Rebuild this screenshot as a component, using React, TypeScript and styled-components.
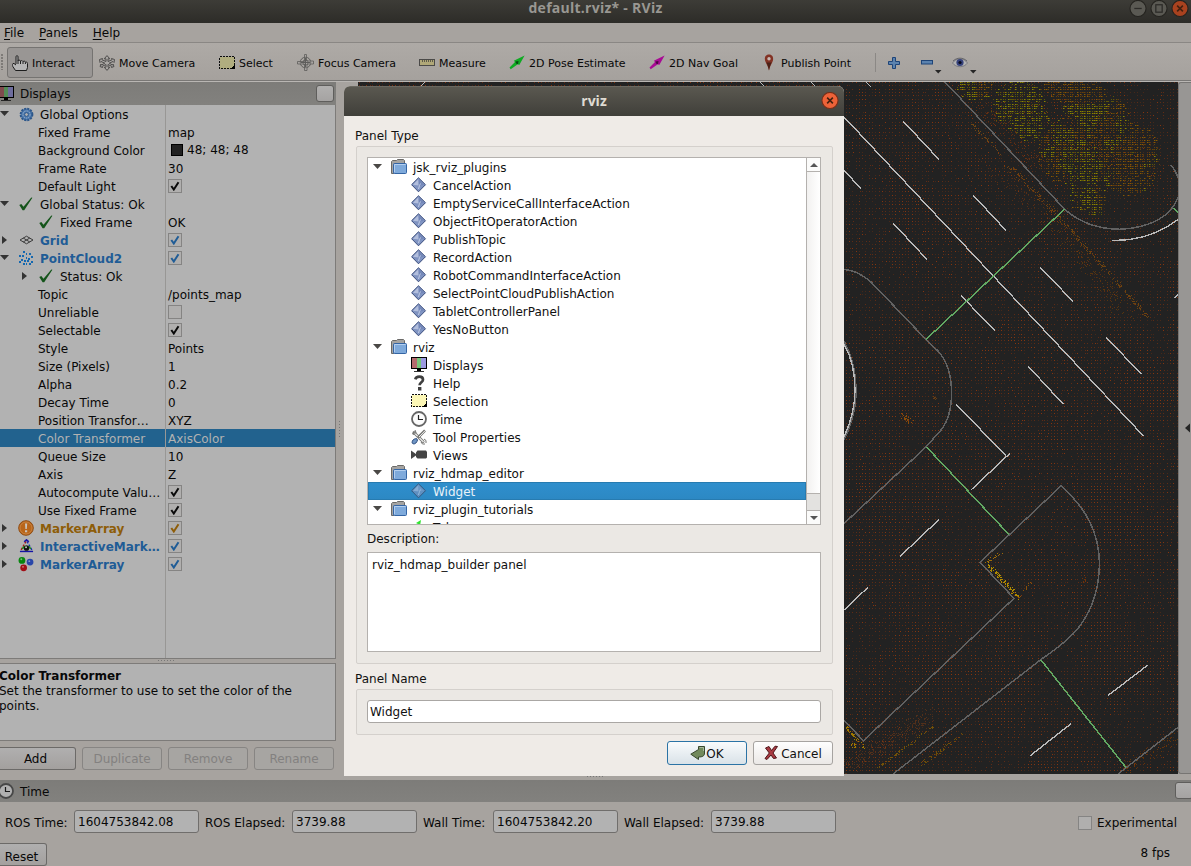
import React from "react";
import styled, { createGlobalStyle, css } from "styled-components";

const Global = createGlobalStyle`
  html, body { margin: 0; padding: 0; overflow: hidden; background: #a7a39f; }
  * { box-sizing: border-box; }
`;

const Window = styled.div`
  position: relative;
  width: 1191px;
  height: 866px;
  overflow: hidden;
  display: flex;
  flex-direction: column;
  background: #a7a39f;
  color: #080808;
  font: 12px/18px "DejaVu Sans", sans-serif;
  white-space: nowrap;
`;

const TitleBar = styled.header`
  position: relative;
  flex: none;
  height: 23px;
  padding: 0 0 8px 0;
  display: flex;
  align-items: center;
  justify-content: center;
  background: linear-gradient(#3d3c37, #2d2c28);
  color: #999792;
  font: 700 14px/14px "Open Sans", "Noto Sans", sans-serif;
  letter-spacing: 0.26px;
`;
const WindowControls = styled.div`
  position: absolute;
  right: 2px;
  top: 0;
  display: flex;
  gap: 3px;
`;

const MenuBar = styled.nav`
  flex: none;
  height: 20px;
  padding: 1px 4px 0;
  display: flex;
  gap: 15px;
  border-bottom: 1px solid #8a8784;
  u { text-underline-offset: 2px; }
`;

const ToolBar = styled.div`
  flex: none;
  height: 38px;
  padding: 4px 0 0 0;
  display: flex;
  background: linear-gradient(#aeaaa6, #a5a19d);
  border-bottom: 1px solid #797775;
  font-size: 11px;
`;
const Grip = styled.div`
  flex: none;
  width: 7px;
  height: 16px;
  margin-top: 7px;
  background: radial-gradient(circle at 2px 1px, #7d7a77 0.8px, transparent 1px) 0 0 / 7px 3px;
`;
const ToolButton = styled.div<{ $w: number; $active?: boolean }>`
  flex: none;
  width: ${(p) => p.$w}px;
  height: 31px;
  padding-left: 4px;
  display: flex;
  align-items: center;
  gap: 4px;
  border: 1px solid transparent;
  border-radius: 3px;
  ${(p) =>
    p.$active &&
    css`
      margin-right: 1px;
      background: #999694;
      border-color: #757371;
    `}
`;
/* Label sitting one pixel below the centre line of its row */
const Label = styled.span<{ $pad?: number }>`
  padding: 2px 0 0 ${(p) => p.$pad || 0}px;
`;
const ToolSlot = styled.div<{ $w: number }>`
  flex: none;
  width: ${(p) => p.$w}px;
  height: 31px;
  display: flex;
  align-items: center;
  gap: 2px;
`;
const ToolSeparator = styled.div`
  width: 1px;
  height: 19px;
  margin: 6px 12px 0 5px;
  background: #8b8885;
`;

const Main = styled.div`
  flex: none;
  height: 699px;
  display: flex;
  border-top: 1px solid #b9b6b3;
`;
const Dock = styled.aside`
  width: 336px;
  flex: none;
  display: flex;
  flex-direction: column;
`;
const DockHeader = styled.div<{ $h: number }>`
  flex: none;
  height: ${(p) => p.$h}px;
  padding-right: 2px;
  display: flex;
  align-items: center;
  background: linear-gradient(#7d7c79, #82817e);
  overflow: hidden;
`;
const HeaderText = styled.span`
  flex: 1;
  padding: 1px 0 0 6px;
`;
const HeaderIcon = styled.div`
  flex: none;
  display: flex;
  margin-left: -2px;
`;
const SquareButton = styled.i<{ $push?: number }>`
  flex: none;
  width: 18px;
  height: 17px;
  margin: -1px ${(p) => -(p.$push || 0)}px 0 0;
  border: 1px solid #5f5e5c;
  border-radius: 3px;
  background: linear-gradient(#b1b0af, #a5a3a2);
`;

const DisplayTree = styled.div`
  flex: none;
  height: 554px;
  background: #b2b2b2;
  border: 1px solid #7d7b79;
  border-width: 0 1px 1px 0;
`;
const PropRow = styled.div<{ $sel?: boolean }>`
  height: 18px;
  display: grid;
  grid-template-columns: 166px 1fr;
  background: ${(p) => (p.$sel ? "#22628e" : "transparent")};
  color: ${(p) => (p.$sel ? "#b2b2b2" : "inherit")};
`;
const NameCell = styled.div<{ $pad: number; $bold?: string }>`
  display: flex;
  align-items: center;
  height: 18px;
  padding-left: ${(p) => p.$pad}px;
  border-right: 1px solid #989795;
  overflow: hidden;
  ${(p) =>
    p.$bold &&
    css`
      color: ${p.$bold};
      font-weight: 700;
    `}
`;
const IconCell = styled.div`
  flex: none;
  width: 16px;
  margin-right: 6px;
  display: flex;
  justify-content: center;
  align-items: center;
`;
const Expander = styled.i<{ $open?: boolean }>`
  flex: none;
  width: 18px;
  height: 8px;
  display: block;
  background: #333;
  clip-path: ${(p) => (p.$open ? "polygon(0 1px, 9px 1px, 4.5px 6px)" : "polygon(2px 0, 7px 4px, 2px 8px)")};
`;
const ValueCell = styled.div`
  display: flex;
  align-items: center;
  padding-left: 2px;
  height: 18px;
`;
const Swatch = styled.i`
  width: 12px;
  height: 12px;
  margin: 0 4px 0 3px;
  background: #212121;
  border: 1px solid #000;
`;
const Box = styled.i`
  flex: none;
  width: 14px;
  height: 14px;
  border: 1px solid #858483;
  background: #b0afae;
  display: flex;
  align-items: center;
  justify-content: center;
`;
const Splitter = styled.div`
  flex: none;
  height: 4px;
  padding: 1px 4px 0 0;
  display: flex;
  justify-content: center;
`;
const Dots = styled.i<{ $vertical?: boolean }>`
  display: block;
  width: ${(p) => (p.$vertical ? 1 : 17)}px;
  height: ${(p) => (p.$vertical ? 17 : 1)}px;
  background: ${(p) =>
    p.$vertical
      ? "repeating-linear-gradient(#777 0 1px, transparent 1px 3px)"
      : "repeating-linear-gradient(90deg, #777 0 1px, transparent 1px 3px)"};
`;
const HelpBox = styled.div`
  flex: none;
  height: 78px;
  padding: 5px 0 0 0;
  background: #b2b2b2;
  border: 1px solid #7d7b79;
  border-left: 0;
  line-height: 15px;
  text-indent: -1px;
`;
const ButtonRow = styled.div`
  display: flex;
  gap: 6px;
  padding-top: 6px;
`;
const PlainButton = styled.button<{ $w: number; $off?: boolean; $clip?: number; $drop?: number }>`
  width: ${(p) => p.$w}px;
  height: 23px;
  padding: ${(p) => p.$drop || 0}px ${(p) => p.$clip || 0}px 0 0;
  flex: none;
  border: 1px solid ${(p) => (p.$off ? "#878583" : "#6c6a68")};
  border-radius: ${(p) => (p.$clip ? "0 3px 3px 0" : "3px")};
  ${(p) => p.$clip && "border-left: 0;"}
  background: ${(p) => (p.$off ? "#a7a5a2" : "linear-gradient(#b0afaf, #a3a09e)")};
  color: ${(p) => (p.$off ? "#838180" : "#080808")};
  font: 12px/20px "DejaVu Sans", sans-serif;
`;
const Gutter = styled.div`
  width: 22px;
  flex: none;
  padding: 339px 0 0 3px;
`;
const Viewport = styled.div`
  width: 820px;
  height: 692px;
  flex: none;
  background: #222;
  svg { display: block; }
`;
const ViewsHandle = styled.div`
  width: 14px;
  height: 692px;
  display: flex;
  align-items: center;
  justify-content: flex-end;
  background: #989694;
  border: 1px solid #777573;
  border-width: 1px 0 1px 1px;
  border-radius: 3px 0 0 3px;
`;

const TimeBody = styled.div`
  height: 43px;
  padding: 8px 14px 0 5px;
  display: flex;
  align-items: flex-start;
`;
const TimeLabel = styled.span<{ $w: number }>`
  width: ${(p) => p.$w}px;
  flex: none;
  line-height: 27px;
`;
const TimeField = styled.div`
  flex: none;
  width: 125px;
  height: 23px;
  padding-left: 3px;
  margin-right: 6px;
  line-height: 22px;
  border: 1px solid #706e6c;
  border-radius: 3px;
  background: #b2b2b2;
`;
const Experimental = styled.label`
  margin-left: auto;
  display: flex;
  align-items: center;
  gap: 5px;
  height: 25px;
`;
const StatusBar = styled.footer`
  display: flex;
  justify-content: space-between;
  padding-right: 21px;
`;
const FrameRate = styled.span`
  line-height: 20px;
`;

const Dialog = styled.section`
  position: absolute;
  left: 344px;
  top: 86px;
  width: 500px;
  height: 690px;
  border-radius: 6px 6px 0 0;
  overflow: hidden;
  display: flex;
  flex-direction: column;
  background: #efebe7;
  color: #111;
`;
const DialogTitle = styled.header`
  position: relative;
  flex: none;
  height: 30px;
  padding-bottom: 2px;
  display: flex;
  align-items: center;
  justify-content: center;
  background: linear-gradient(#5a5850, #403f3a);
  border-top: 1px solid #6a6860;
  color: #dfdbd2;
  font: 700 14px/20px "Open Sans", "Noto Sans", sans-serif;
  svg { position: absolute; right: 5px; top: 5px; }
`;
const DialogBody = styled.div`
  padding: 10px 11px 0 12px;
  display: flex;
  flex-direction: column;
`;
const GroupLabel = styled.div<{ $mt?: number }>`
  height: 20px;
  line-height: 20px;
  margin: ${(p) => p.$mt || 0}px 0 0 -1px;
`;
const Group = styled.div<{ $h: number }>`
  height: ${(p) => p.$h}px;
  padding: 10px 11px 10px 10px;
  background: #ebe8e4;
  border: 1px solid #d4d0cc;
  border-radius: 2px;
`;
const PluginBox = styled.div`
  height: 368px;
  display: flex;
  border: 1px solid #b4b1ae;
  background: #fff;
`;
const PluginList = styled.div`
  flex: 1;
  overflow: hidden;
`;
const PluginRow = styled.div<{ $sel?: boolean; $level: number }>`
  height: 18px;
  padding-left: ${(p) => (p.$level ? 43 : 5)}px;
  display: flex;
  align-items: center;
  background: ${(p) => (p.$sel ? "linear-gradient(#2f8fcd, #2c88c3)" : "none")};
  box-shadow: ${(p) => (p.$sel ? "inset 0 0 0 1px #277bb0" : "none")};
  color: ${(p) => (p.$sel ? "#e9f2f8" : "inherit")};
  i { background: #4a4846; }
`;
const Scroll = styled.div`
  width: 14px;
  display: flex;
  flex-direction: column;
  border-left: 1px solid #b4b1ae;
  background: #e3e2e0;
`;
const ScrollEnd = styled.div<{ $bottom?: boolean }>`
  height: 14px;
  display: flex;
  align-items: center;
  justify-content: center;
  background: #fbfbfa;
  border: 0 solid #b4b1ae;
  ${(p) => (p.$bottom ? "border-top-width: 1px; margin-top: auto;" : "border-bottom-width: 1px;")}
`;
const Thumb = styled.div`
  height: 322px;
  background: linear-gradient(90deg, #f2f1f0, #fff);
  border-bottom: 1px solid #b4b1ae;
`;
const DescriptionLabel = styled.div`
  height: 27px;
  padding-top: 5px;
`;
const DescriptionBox = styled.div`
  height: 100px;
  padding: 3px 4px;
  border: 1px solid #b4b1ae;
  background: #fff;
`;
const NameInput = styled.div`
  height: 23px;
  padding-left: 2px;
  line-height: 22px;
  border: 1px solid #aaa7a4;
  border-radius: 3px;
  background: #fff;
`;
const DialogActions = styled.div`
  display: flex;
  justify-content: flex-end;
  gap: 6px;
  padding-top: 6px;
`;
const DialogButton = styled.button<{ $primary?: boolean }>`
  width: 80px;
  height: 24px;
  padding: 0;
  display: flex;
  align-items: center;
  justify-content: center;
  gap: ${(p) => (p.$primary ? 0 : 2)}px;
  color: #111;
  border: 1px solid ${(p) => (p.$primary ? "#2b73a5" : "#a6a3a0")};
  border-radius: 3px;
  background: ${(p) => (p.$primary ? "linear-gradient(#f9fbfc, #d9e2e8)" : "linear-gradient(#fefefe, #ebe8e6)")};
  font: 12px/20px "DejaVu Sans", sans-serif;
`;
const Dim = styled.span`
  display: flex;
  filter: brightness(0.7);
`;
const ResizeDots = styled.div`
  position: absolute;
  left: 587px;
  top: 776px;
`;

/* ---------- icons ---------- */

const MonitorIcon = () => (
  <svg width="16" height="16" viewBox="0 0 16 16" shapeRendering="crispEdges">
    <rect x="0" y="0" width="16" height="12" fill="#000" />
    <rect x="1" y="1" width="5" height="10" fill="#b56a6e" />
    <rect x="6" y="1" width="4" height="10" fill="#78c67c" />
    <rect x="10" y="1" width="5" height="10" fill="#9c9ae0" />
    <rect x="6" y="12" width="4" height="2" fill="#000" />
    <rect x="3" y="14" width="10" height="1" fill="#333" />
  </svg>
);
const ClockIcon = () => (
  <svg width="16" height="16" viewBox="0 0 16 16">
    <circle cx="8" cy="8" r="7" fill="#fcfcfc" stroke="#666" strokeWidth="1.8" />
    <path d="M7.5 4v4.5H12" stroke="#222" strokeWidth="1.2" fill="none" />
  </svg>
);
const SelectIcon = () => (
  <svg width="16" height="14" viewBox="0 0 16 14" shapeRendering="crispEdges">
    <rect x=".5" y=".5" width="15" height="12" fill="#fcf7b6" stroke="#111" strokeDasharray="2 1" />
    <path d="M16 9v4h-4v-1l3-3z" fill="#000" />
  </svg>
);
const DiamondIcon = ({ sel }: { sel?: boolean }) => (
  <svg width="16" height="16" viewBox="0 0 16 16">
    <path d="M7.5 .8 14.5 7.7 7.5 14.8 .6 7.7Z" fill={sel ? "#5f8fc0" : "#8094c2"} stroke={sel ? "#35597f" : "#3a4d7c"} strokeWidth="1" />
    <path d="M7.5 2V8.500L2 7.700Z" fill={sel ? "#86acd4" : "#b3bfdd"} />
    <path d="M7.5 2 13 7.700 8 8.500Z" fill={sel ? "#6c97c6" : "#7387b8"} />
    <path d="M8.500 8.500 9.500 6.500M8.500 8.500 7.500 12" fill="none" stroke={sel ? "#9dbfe0" : "#c8d2ea"} strokeWidth=".9" />
  </svg>
);
const FolderIcon = () => (
  <svg width="17" height="16" viewBox="0 0 17 16">
    <path d="M.5 14.5V2.5L1.5 1.5H5.5L6.5 .5H12.5L13.5 1.5V5H3V14.5Z" fill="#a5a4a2" stroke="#6b6a68" />
    <rect x="2.5" y="4.5" width="13" height="10" rx="1" fill="#7faadb" stroke="#3465a4" />
    <path d="M3.5 13V5.500H14.500" stroke="#b4cfef" fill="none" />
  </svg>
);
const QuestionIcon = () => (
  <svg width="16" height="16" viewBox="0 0 16 16">
    <path d="M4.300 4.300C4.800 2.300 6.300 1.700 8.300 1.700 10.500 1.700 12 2.800 12 4.700 12 7.300 8.600 7.300 8.600 10.300" stroke="#3f3f3f" strokeWidth="2.700" fill="none" />
    <rect x="7" y="12" width="3.400" height="3.500" fill="#3f3f3f" />
  </svg>
);
const ToolsIcon = () => (
  <svg width="16" height="16" viewBox="0 0 16 16" fill="none">
    <path d="M3 3.500 12 12.500" stroke="#747472" strokeWidth="3" strokeLinecap="round" />
    <path d="M3.500 4 12.500 13" stroke="#ededeb" strokeWidth="1.200" />
    <path d="M1 4.500 3 5.500 5 3.500 4 1M13 10l2 1.500v2.500M10 13l1.500 2H14" stroke="#747472" />
    <path d="M14 1.500 7 8.500" stroke="#70706e" strokeWidth="2.500" />
    <path d="M14 1.800 8 8" stroke="#f0f0ee" strokeWidth="1" />
    <path d="M5.500 9.500 6.500 11C5.800 13.500 4.300 15.300 2.200 14.800 .7 14.300 .8 12.800 2 11 3 10 4.200 9.700 5.500 9.500Z" fill="#6f95c4" stroke="#28497c" />
  </svg>
);
const CameraIcon = () => (
  <svg width="16" height="16" viewBox="0 0 16 16">
    <path d="M0 3.500 5 7V5.500L6.500 3.500H15L16 5V10.500L15 11.500H6.500L5 10V8.500L0 12Z" fill="#444" />
  </svg>
);
const GreenArrowIcon = () => (
  <svg width="16" height="16" viewBox="0 0 16 16">
    <path d="M1 9 7 5 5 4 10 1 9 7" fill="#2fe52f" />
  </svg>
);
const GearIcon = () => (
  <svg width="15" height="15" viewBox="0 0 16 16">
    <circle cx="8" cy="8" r="6.300" fill="#4a76ab" stroke="#2c5689" strokeWidth="2" strokeDasharray="2.200 1.100" />
    <circle cx="8" cy="8" r="3.800" fill="none" stroke="#9db4cf" strokeWidth="1" strokeDasharray="1.500 1" />
    <circle cx="8" cy="8" r="2" fill="#b2b2b2" stroke="#2c5689" />
  </svg>
);
const OkIcon = () => (
  <svg width="14" height="14" viewBox="0 0 14 14">
    <path d="M.3 8 2.300 7 4.500 9.800 12.300 .6 13.400 .8 5.200 13.200 3.600 13.200Z" fill="#14541a" />
  </svg>
);
const GridIcon = () => (
  <svg width="15" height="10" viewBox="0 0 15 10" fill="none" stroke="#3b3b3b">
    <path d="M1 5 7.500 1.200 14 5 7.500 8.800ZM4.200 3 10.800 7M10.800 3 4.200 7" />
  </svg>
);
const CLOUD: number[][] = [[5, 1], [8, 3], [12, 3], [1, 5], [4, 5], [14, 6], [8, 7], [11, 8], [3, 9], [6, 10], [10, 10], [14, 11], [1, 11], [5, 13], [8, 13], [12, 13]];
const CloudIcon = () => (
  <svg width="17" height="16" viewBox="0 0 17 16" shapeRendering="crispEdges">
    {CLOUD.map(([x, y], i) => (
      <rect key={i} x={x} y={y} width="2" height="2" fill="#1468b0" />
    ))}
  </svg>
);
const WarnIcon = () => (
  <svg width="16" height="16" viewBox="0 0 16 16">
    <circle cx="8" cy="8" r="7.300" fill="#b9661b" stroke="#8f4c13" />
    <circle cx="8" cy="8" r="6" fill="none" stroke="#cb8848" strokeWidth=".8" />
    <path d="M7 3.500H9.200L8.800 9H7.400ZM7 10.300H9.200V12.300H7Z" fill="#c9c4bd" />
  </svg>
);
const InteractiveIcon = () => (
  <svg width="15" height="15" viewBox="0 0 16 16" fill="none" strokeWidth="1.500">
    <path d="M7.500 2.500 1.800 12.500" stroke="#a51717" strokeDasharray="2.500 1.500" />
    <path d="M8.500 2.500 14.200 12.500" stroke="#1c2dad" strokeDasharray="2.500 1.500" />
    <path d="M1 13.300H15" stroke="#1414a5" />
    <path d="M5.500 3 8 .8 10.500 3" stroke="#1414a5" />
    <path d="M3.500 10.500A5 5 0 0 1 12.500 10.500" stroke="#178b17" />
    <circle cx="8" cy="9.800" r="2.800" fill="#111" />
    <circle cx="7.500" cy="8.800" r="1" fill="#ccc" />
  </svg>
);
const MarkersIcon = () => (
  <svg width="17" height="16" viewBox="0 0 17 16">
    <circle cx="4.200" cy="4.200" r="3.600" fill="#08860f" />
    <circle cx="12.800" cy="6" r="3.600" fill="#2946a9" />
    <circle cx="6" cy="12" r="3.600" fill="#a20f17" />
    <circle cx="3.500" cy="3" r="1" fill="#73bd75" />
    <circle cx="12" cy="5" r="1" fill="#8294cc" />
    <circle cx="5.300" cy="11" r="1" fill="#cf7b80" />
  </svg>
);
const CheckMark = ({ color }: { color: string }) => (
  <svg width="10" height="10" viewBox="0 0 10 10">
    <path d="M1.300 5 3.800 8.500 8.500 1.300" stroke={color} strokeWidth="2" fill="none" />
  </svg>
);
const HandIcon = () => (
  <svg width="16" height="16" viewBox="0 0 16 16">
    <path d="M4 9V1.700C4 .3 6 .3 6 1.700V5.500C7 4.800 8 5.200 8.400 6 9.500 5.200 10.600 5.800 11 6.600 12.200 5.700 13.300 6.300 13.400 7.300 14.500 6.600 15.500 7.300 15.500 8.500V12.500L14.500 15.500H3.500L.8 11.500C0 10 .3 9 1 8.500H2L4 10" fill="#b5b5b5" stroke="#1d1d1d" />
    <path d="M6 5V9M8.500 6V9M11 7V9M13.400 7.500V9" stroke="#1d1d1d" fill="none" />
  </svg>
);
const MoveIcon = () => (
  <svg width="16" height="16" viewBox="0 0 16 16" fill="#aaa7a4" stroke="#4e4d4c" strokeWidth="1">
    <path d="M8 .6 10.800 3.800H9V6.500L13 4.800 12.500 3.500 15.500 4.500 15 7.500 14 6.500 10.200 8.200 13.500 10 14 9 15 11.500 12.500 12.500 12.800 11.300 9 9.500V12.200H10.800L8 15.400 5.200 12.200H7V9.500L3.200 11.300 3.500 12.500 1 11.500 2 9 2.500 10 5.800 8.200 2 6.500 1 7.500 .5 4.500 3.500 3.500 3 4.800 7 6.500V3.800H5.200Z" />
  </svg>
);
const FocusIcon = () => (
  <svg width="17" height="17" viewBox="0 0 17 17" fill="none" stroke="#5e5d5b">
    <circle cx="8.500" cy="8.500" r="5.300" />
    <circle cx="8.500" cy="8.500" r="2.600" />
    <path d="M7.500 .5H9.500V7H16.500V10H10V16.500H7.500V10H.5V7.500H7.500Z" strokeWidth=".8" fill="#a9a6a3" fillOpacity=".5" />
    <path d="M3.500 8.500H13.500M8.500 3.500V13.500" />
  </svg>
);
const RulerIcon = () => (
  <svg width="16" height="7" viewBox="0 0 16 7" shapeRendering="crispEdges">
    <rect x=".5" y=".5" width="15" height="6" fill="#b0a878" stroke="#4b4a48" />
    <path d="M3.500 1v2M5.500 1v2M7.500 1v2M9.500 1v2M11.500 1v2M13.500 1v2" stroke="#5e5b4c" />
  </svg>
);
const NeedleIcon = ({ color, dark }: { color: string; dark: string }) => (
  <svg width="16" height="16" viewBox="0 0 16 16">
    <path d="M.5 12.500 6 7 4.800 5.800 15.600 .6 10.300 10 8.800 9.200 1.700 14.300Z" fill={color} />
    <path d="M6.500 6.500 9.500 6 9 9.200 7 8.500Z" fill={dark} />
  </svg>
);
const PinIcon = () => (
  <svg width="16" height="17" viewBox="0 0 16 17">
    <path d="M8 .5C4.800 .5 3.600 3 3.900 5.500 4.200 8.500 7 11.500 8 16.500 9 11.500 11.800 8.500 12.100 5.500 12.400 3 11.200 .5 8 .5Z" fill="#823224" />
    <path d="M5.500 8.500C6.500 11 7.500 13 8 16.500 8.500 13 9.500 11 10.500 8.500Z" fill="#4a2118" />
    <circle cx="8" cy="4.800" r="1.700" fill="#c7b7b2" />
  </svg>
);
const PlusIcon = () => (
  <svg width="12" height="12" viewBox="0 0 12 12">
    <path d="M4.500 .5H7.500V4.500H11.500V7.500H7.500V11.500H4.500V7.500H.5V4.500H4.500Z" fill="#5b82ae" stroke="#1e4478" />
  </svg>
);
const MinusIcon = () => (
  <svg width="12" height="5" viewBox="0 0 12 5">
    <rect x=".5" y=".5" width="11" height="3.500" fill="#5b82ae" stroke="#1e4478" />
  </svg>
);
const EyeIcon = () => (
  <svg width="16" height="12" viewBox="0 0 16 12">
    <path d="M.5 6C4 .5 12 .5 15.500 6 12 11 4 11 .5 6Z" fill="#b3b3b3" stroke="#7b7b80" />
    <circle cx="8" cy="5.500" r="3.600" fill="#36427c" />
    <circle cx="8" cy="5.500" r="1.600" fill="#07091c" />
    <path d="M1 4C5 .2 11 .2 15 4" stroke="#66666b" fill="none" />
  </svg>
);
const DropArrow = () => (
  <svg width="7" height="22" viewBox="0 0 7 22">
    <path d="M0 18H6.500L3.200 21.500Z" fill="#262626" />
  </svg>
);
const RoundControl = ({ kind, size = 18, bright }: { kind: "min" | "max" | "close"; size?: number; bright?: boolean }) => (
  <svg width={size} height={size} viewBox="0 0 17 17" fill="none">
    <circle cx="8.500" cy="8" r="7.600" fill={kind === "close" ? (bright ? "#ed6238" : "#a9421f") : "#5a5953"} stroke={bright ? "#752e18" : "#24231f"} />
    {kind === "min" && <path d="M5 8H12" stroke="#2c2b28" strokeWidth="1.200" />}
    {kind === "max" && <rect x="5.500" y="4.500" width="6" height="7" stroke="#2c2b28" strokeWidth="1.200" />}
    {kind === "close" && <path d="M5.800 5.300 11.200 10.700M11.200 5.300 5.800 10.700" stroke="#43200f" strokeWidth="1.500" />}
  </svg>
);
const EnterIcon = () => (
  <svg width="16" height="17" viewBox="0 0 16 17">
    <path d="M8.500 1.500H14.500V8C14.500 11 12.500 12 8.500 12V14.500L.8 9.200 8.500 4.500Z" fill="#728a5c" stroke="#38472d" />
    <path d="M9.500 2.500H13.500V6" stroke="#a8b89a" fill="none" />
  </svg>
);
const CrossIcon = () => (
  <svg width="15" height="16" viewBox="0 0 15 16">
    <path d="M1.500 3 5 1.500 7.500 5.500 11 1.200 13.500 1.500 9 8 12.500 13 9.500 13.500 7 10 3 14.500 1 13.500 5.300 8Z" fill="#a93a42" stroke="#4e1519" />
  </svg>
);

/* ---------- map view ---------- */

const hash = (x: number, y: number) => {
  let h = (x * 374761393 + y * 668265263) | 0;
  h = Math.imul(h ^ (h >>> 13), 1274126177);
  return ((h ^ (h >>> 16)) >>> 0) / 4294967296;
};
const smooth = (x: number, y: number) => {
  const ix = Math.floor(x), iy = Math.floor(y);
  const fx = x - ix, fy = y - iy;
  const a = hash(ix, iy), b = hash(ix + 1, iy), c = hash(ix, iy + 1), d = hash(ix + 1, iy + 1);
  return (a * (1 - fx) + b * fx) * (1 - fy) + (c * (1 - fx) + d * fx) * fy;
};

type Layers = Record<string, string[]>;
const dot = (l: Layers, color: string, x: number, y: number) => {
  (l[color] = l[color] || []).push(`M${Math.round(x)} ${Math.round(y)}h1v1h-1z`);
};

/* cx, cy, rx, ry, yellowness of each tree canopy */
const CANOPIES: number[][] = [
  [975, 86, 19, 14, 0.5], [1018, 106, 28, 26, 1], [1030, 122, 20, 19, 0.9], [1068, 84, 26, 20, 0.1], [1085, 102, 24, 26, 0.4],
  [1068, 150, 32, 34, 0.4], [1096, 140, 36, 40, 0.6], [1128, 158, 32, 38, 0.2], [1108, 120, 22, 26, 0.5], [1092, 165, 26, 30, 0.8], [1082, 196, 14, 16, 0.8], [1095, 200, 10, 18, 0.6],
];
/* x1, y1, x2, y2, spread, count, colour */
const STREAKS: [number, number, number, number, number, number, string][] = [
  [971, 123, 1000, 153, 2, 40, "#6d4414"],
  [1006, 163, 1056, 213, 3, 90, "#70400f"],
  [1056, 213, 1146, 315, 2, 150, "#6d420f"],
  [1050, 215, 1125, 312, 9, 150, "#57350f"],
  [985, 165, 1060, 225, 10, 60, "#552f15"],
  [980, 105, 1040, 165, 9, 110, "#632f13"],
  [987, 564, 1018, 597, 2, 95, "#b08a00"],
  [985, 562, 1002, 552, 1.5, 18, "#a06b08"],
  [1018, 597, 1030, 583, 1.5, 16, "#8a5008"],
  [844, 725, 864, 747, 1.5, 45, "#a07800"],
  [851, 744, 854, 746, 2, 12, "#a07800"],
  [872, 772, 933, 726, 1.2, 75, "#725008"],
  [919, 766, 962, 734, 2, 55, "#6d4c08"],
  [844, 770, 930, 713, 8, 260, "#51301b"],
  [903, 415, 911, 423, 3, 26, "#8a4b08"],
  [930, 392, 936, 400, 1, 8, "#6b3d12"],
  [1083, 578, 1086, 582, 2, 12, "#703209"],
  [1120, 770, 1178, 735, 6, 90, "#663408"],
];

const buildPoints = (): Layers => {
  const l: Layers = {};
  for (let j = 0; j < 210; j++) {
    const y = 82 + Math.round(j * 3.31);
    if (y >= 774) break;
    for (let i = 0; i < 250; i++) {
      const x = 359 + Math.round(i * 3.31);
      if (x >= 1178) break;
      if (x < 842 && y > 86) continue;
      const n = smooth(x / 48, y / 48) * 0.6 + smooth(x / 17 + 40, y / 17) * 0.4;
      const r = hash(x + 7, y + 3);
      if (r > 0.4 + n * 0.75) continue;
      const jx = hash(x, y) > 0.88 ? 1 : 0;
      const k = hash(y, x + 5) + (n - 0.5) * 0.7;
      dot(l, k > 0.8 ? "#84350f" : k > 0.4 ? "#5f2c15" : "#462819", x + jx, y);
    }
  }
  for (let j = 0; j < 56; j++) {
    const y = 82 + Math.round(j * 2.4);
    for (let i = 0; i < 90; i++) {
      const x = 950 + Math.round(i * 2.4);
      let best = 0, hue = 0, weight = 0;
      for (const [cx, cy, rx, ry, yel] of CANOPIES) {
        const d = 1 - Math.hypot((x - cx) / rx, (y - cy) / ry);
        if (d > best) best = d;
        if (d > 0) {
          hue += yel * d;
          weight += d;
        }
      }
      if (best <= 0) continue;
      const n = smooth(x / 11, y / 11);
      if (hash(x * 3, y * 5) > 0.25 + Math.min(best, 0.5) * 0.8 + n * 0.4) continue;
      const yellow = hue / weight + (n - 0.5) * 0.9 > 0.5;
      const bright = hash(x + 91, y + 17);
      const c = yellow ? (bright > 0.6 ? "#8a8203" : "#5c5609") : bright > 0.6 ? "#845a06" : "#62400c";
      dot(l, c, x, y);
      if (bright > 0.5) dot(l, yellow ? "#5c5609" : "#55380c", x + 1, y);
    }
  }
  STREAKS.forEach(([x1, y1, x2, y2, s, count, c], k) => {
    for (let i = 0; i < count; i++) {
      const t = hash(i, k * 31 + 1);
      const ox = (hash(i, k * 31 + 2) - 0.5) * 2 * s;
      const oy = (hash(i, k * 31 + 3) - 0.5) * 2 * s;
      dot(l, c, x1 + (x2 - x1) * t + ox, y1 + (y2 - y1) * t + oy);
    }
  });
  return l;
};
const POINTS = buildPoints();

const CURBS = [
  "M945 82L1065 209.500C1080 223 1098 229 1120 229.300C1150 228 1172 216 1178 197",
  "M1171 165C1174 169 1177 174 1178 178",
  "M844 269.500C853 270 863 275 871 282L926 339.500L938 351C948 362 951.500 376 951.500 393C951.500 408 949 420 941 430L926 447L844 523.500",
  "M844 720.500L863.500 740.700L1014 598.300L980 562.300L1061 486C1086 508 1099 532 1099.500 564C1099 590 1091 615 1073 634C1064 643 1052 652 1041 659.500L893 774",
  "M1178 727.300L1118 774",
  "M844 341C853 358 857 376 856 396C855 412 850 428 844 440",
];
const LANES = [
  "M844 117L1143.500 436", "M903.500 121.500L939 159.500", "M844 170.500L861 188.500", "M973.500 195.500L1006 230.500",
  "M893.500 223.500L927 259.500", "M1040.500 267.500L1073 301.500", "M961 295.500L995.500 331.500", "M1106.500 337.500L1141.500 374.500",
  "M1028.500 366.500L1063.500 404.500", "M956.500 404.500L1006 456", "M1009.700 453.500L971.500 489.500", "M939 519.500L900 556.500",
  "M868 587.300L844 610", "M1147.500 665.300L1108 695.500", "M1071 723.700L1030.500 755.500", "M1174.500 297.500L1178 294.500",
  "M760 82L765 87", "M811 82L816 87", "M866 82L871 87", "M420 87L425 82",
  "M1112 240.300C1138 241 1160 233 1178 219.500",
  "M844 344C852 358 855 374 855 390C855 408 850 424 844 437",
];
const STOPS = ["M926 339.500L1064.700 209", "M1173.500 208L1178 212", "M926.500 447L1009 534.500", "M1041 660L1126 767.500"];

const Scene = () => (
  <svg width="820" height="692" viewBox="358 82 820 692" fill="none" shapeRendering="crispEdges">
    {Object.entries(POINTS).map(([c, d]) => (
      <path key={c} d={d.join("")} fill={c} />
    ))}
    <path d={CURBS.join("")} stroke="#616161" strokeWidth="1.500" />
    <path d={LANES.join("")} stroke="#b9b9b9" strokeWidth="1.400" />
    <path d={STOPS.join("")} stroke="#62a862" strokeWidth="1.500" />
  </svg>
);

/* ---------- data ---------- */

type Prop = {
  name: string;
  pad: number;
  open?: boolean;
  icon?: React.ReactNode;
  bold?: string;
  value?: string;
  check?: string;
  swatch?: boolean;
  sel?: boolean;
};
const BLUE = "#1f5c96";
const AMBER = "#8e5d08";
const BLACK = "#0a0a0a";
const PROPS: Prop[] = [
  { name: "Global Options", pad: 0, open: true, icon: <GearIcon /> },
  { name: "Fixed Frame", pad: 38, value: "map" },
  { name: "Background Color", pad: 38, value: "48; 48; 48", swatch: true },
  { name: "Frame Rate", pad: 38, value: "30" },
  { name: "Default Light", pad: 38, check: BLACK },
  { name: "Global Status: Ok", pad: 0, open: true, icon: <OkIcon /> },
  { name: "Fixed Frame", pad: 38, icon: <OkIcon />, value: "OK" },
  { name: "Grid", pad: 0, open: false, icon: <GridIcon />, bold: BLUE, check: BLUE },
  { name: "PointCloud2", pad: 0, open: true, icon: <CloudIcon />, bold: BLUE, check: BLUE },
  { name: "Status: Ok", pad: 20, open: false, icon: <OkIcon /> },
  { name: "Topic", pad: 38, value: "/points_map" },
  { name: "Unreliable", pad: 38, check: "none" },
  { name: "Selectable", pad: 38, check: BLACK },
  { name: "Style", pad: 38, value: "Points" },
  { name: "Size (Pixels)", pad: 38, value: "1" },
  { name: "Alpha", pad: 38, value: "0.2" },
  { name: "Decay Time", pad: 38, value: "0" },
  { name: "Position Transfor…", pad: 38, value: "XYZ" },
  { name: "Color Transformer", pad: 38, value: "AxisColor", sel: true },
  { name: "Queue Size", pad: 38, value: "10" },
  { name: "Axis", pad: 38, value: "Z" },
  { name: "Autocompute Valu…", pad: 38, check: BLACK },
  { name: "Use Fixed Frame", pad: 38, check: BLACK },
  { name: "MarkerArray", pad: 0, open: false, icon: <WarnIcon />, bold: AMBER, check: AMBER },
  { name: "InteractiveMark…", pad: 0, open: false, icon: <InteractiveIcon />, bold: BLUE, check: BLUE },
  { name: "MarkerArray", pad: 0, open: false, icon: <MarkersIcon />, bold: BLUE, check: BLUE },
];
const TreeFill = styled.div`
  flex: 1;
  width: 166px;
  border-right: 1px solid #989795;
`;
const TreeRows = styled.div`
  height: 553px;
  display: flex;
  flex-direction: column;
`;

const PLUGINS: { name: string; icon?: React.ReactNode; sel?: boolean }[] = [
  { name: "jsk_rviz_plugins" },
  ...["CancelAction", "EmptyServiceCallInterfaceAction", "ObjectFitOperatorAction", "PublishTopic", "RecordAction", "RobotCommandInterfaceAction", "SelectPointCloudPublishAction", "TabletControllerPanel", "YesNoButton"].map((name) => ({ name, icon: <DiamondIcon /> })),
  { name: "rviz" },
  { name: "Displays", icon: <MonitorIcon /> },
  { name: "Help", icon: <QuestionIcon /> },
  { name: "Selection", icon: <SelectIcon /> },
  { name: "Time", icon: <ClockIcon /> },
  { name: "Tool Properties", icon: <ToolsIcon /> },
  { name: "Views", icon: <CameraIcon /> },
  { name: "rviz_hdmap_editor" },
  { name: "Widget", icon: <DiamondIcon sel />, sel: true },
  { name: "rviz_plugin_tutorials" },
  { name: "Teleop", icon: <GreenArrowIcon /> },
];

const TOOLS: { name: string; w: number; icon: React.ReactNode; active?: boolean }[] = [
  { name: "Interact", w: 86, icon: <HandIcon />, active: true },
  { name: "Move Camera", w: 120, icon: <MoveIcon /> },
  { name: "Select", w: 78, icon: <Dim><SelectIcon /></Dim> },
  { name: "Focus Camera", w: 122, icon: <FocusIcon /> },
  { name: "Measure", w: 90, icon: <RulerIcon /> },
  { name: "2D Pose Estimate", w: 140, icon: <NeedleIcon color="#0faa22" dark="#064d10" /> },
  { name: "2D Nav Goal", w: 112, icon: <NeedleIcon color="#a80a94" dark="#4e0545" /> },
  { name: "Publish Point", w: 114, icon: <PinIcon /> },
];

const TIMES: [string, number, string][] = [
  ["ROS Time:", 69, "1604753842.08"],
  ["ROS Elapsed:", 87, "3739.88"],
  ["Wall Time:", 70, "1604753842.20"],
  ["Wall Elapsed:", 87, "3739.88"],
];

const ScrollArrow = ({ down }: { down?: boolean }) => (
  <svg width="8" height="4" viewBox="0 0 8 4">
    <path d={down ? "M0 0H8L4 4Z" : "M0 4H8L4 0Z"} fill="#555" />
  </svg>
);

export default function App() {
  return (
    <Window>
      <Global />
      <TitleBar>
        default.rviz* - RViz
        <WindowControls>
          <RoundControl kind="min" />
          <RoundControl kind="max" />
          <RoundControl kind="close" />
        </WindowControls>
      </TitleBar>
      <MenuBar>
        <span><u>F</u>ile</span>
        <span><u>P</u>anels</span>
        <span><u>H</u>elp</span>
      </MenuBar>
      <ToolBar>
        <Grip />
        {TOOLS.map((t) => (
          <ToolButton key={t.name} $w={t.w} $active={t.active}>
            {t.icon}
            <Label>{t.name}</Label>
          </ToolButton>
        ))}
        <ToolSeparator />
        <ToolSlot $w={33}><PlusIcon /></ToolSlot>
        <ToolSlot $w={31}><MinusIcon /><DropArrow /></ToolSlot>
        <ToolSlot $w={30}><EyeIcon /><DropArrow /></ToolSlot>
      </ToolBar>
      <Main>
        <Dock>
          <DockHeader $h={23}>
            <HeaderIcon><Dim><MonitorIcon /></Dim></HeaderIcon>
            <HeaderText>Displays</HeaderText>
            <SquareButton />
          </DockHeader>
          <DisplayTree>
            <TreeRows>
              {PROPS.map((p, i) => (
                <PropRow key={i} $sel={p.sel}>
                  <NameCell $pad={p.pad} $bold={p.bold}>
                    {p.open !== undefined && <Expander $open={p.open} />}
                    {p.icon && <IconCell>{p.icon}</IconCell>}
                    <Label>{p.name}</Label>
                  </NameCell>
                  <ValueCell>
                    {p.swatch && <Swatch />}
                    {p.swatch ? p.value : p.value && <Label>{p.value}</Label>}
                    {p.check && <Box>{p.check !== "none" && <CheckMark color={p.check} />}</Box>}
                  </ValueCell>
                </PropRow>
              ))}
              <TreeFill />
            </TreeRows>
          </DisplayTree>
          <Splitter><Dots /></Splitter>
          <HelpBox>
            <b>Color Transformer</b>
            <div>Set the transformer to use to set the color of the</div>
            <div>points.</div>
          </HelpBox>
          <ButtonRow>
            <PlainButton $w={76} $clip={4}>Add</PlainButton>
            <PlainButton $w={80} $off>Duplicate</PlainButton>
            <PlainButton $w={80} $off>Remove</PlainButton>
            <PlainButton $w={80} $off>Rename</PlainButton>
          </ButtonRow>
        </Dock>
        <Gutter><Dots $vertical /></Gutter>
        <Viewport><Scene /></Viewport>
        <ViewsHandle>
          <svg width="7" height="10" viewBox="0 0 7 10"><path d="M1 5 6 .500V9.500Z" fill="#262626" /></svg>
        </ViewsHandle>
      </Main>
      <DockHeader $h={22}>
        <HeaderIcon><Dim><ClockIcon /></Dim></HeaderIcon>
        <HeaderText>Time</HeaderText>
        <SquareButton $push={4} />
      </DockHeader>
      <TimeBody>
        {TIMES.map(([label, w, value]) => (
          <React.Fragment key={label}>
            <TimeLabel $w={w}>{label}</TimeLabel>
            <TimeField>{value}</TimeField>
          </React.Fragment>
        ))}
        <Experimental><Box />Experimental</Experimental>
      </TimeBody>
      <StatusBar>
        <PlainButton $w={47} $clip={3} $drop={3}>Reset</PlainButton>
        <FrameRate>8 fps</FrameRate>
      </StatusBar>
      <ResizeDots><Dots /></ResizeDots>

      <Dialog>
        <DialogTitle>
          rviz
          <RoundControl kind="close" size={18} bright />
        </DialogTitle>
        <DialogBody>
          <GroupLabel>Panel Type</GroupLabel>
          <Group $h={518}>
            <PluginBox>
              <PluginList>
                {PLUGINS.map((p) => (
                  <PluginRow key={p.name} $level={p.icon ? 1 : 0} $sel={p.sel}>
                    {!p.icon && <Expander $open />}
                    {p.icon || <FolderIcon />}
                    <Label $pad={p.icon ? 6 : 5}>{p.name}</Label>
                  </PluginRow>
                ))}
              </PluginList>
              <Scroll>
                <ScrollEnd><ScrollArrow /></ScrollEnd>
                <Thumb />
                <ScrollEnd $bottom><ScrollArrow down /></ScrollEnd>
              </Scroll>
            </PluginBox>
            <DescriptionLabel>Description:</DescriptionLabel>
            <DescriptionBox>rviz_hdmap_builder panel</DescriptionBox>
          </Group>
          <GroupLabel $mt={5}>Panel Name</GroupLabel>
          <Group $h={46}>
            <NameInput>Widget</NameInput>
          </Group>
          <DialogActions>
            <DialogButton $primary><EnterIcon /><Label>OK</Label></DialogButton>
            <DialogButton><CrossIcon /><Label>Cancel</Label></DialogButton>
          </DialogActions>
        </DialogBody>
      </Dialog>
    </Window>
  );
}
